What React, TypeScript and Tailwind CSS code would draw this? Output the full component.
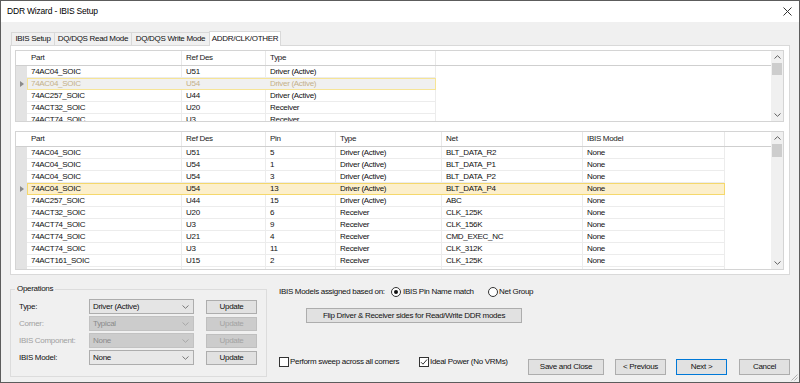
import React from "react";

type Col = { label: string; w: string };

const upperCols: Col[] = [
  { label: "Part", w: "w-[155px]" },
  { label: "Ref Des", w: "w-[84px]" },
  { label: "Type", w: "w-[170px]" },
];

const lowerCols: Col[] = [
  { label: "Part", w: "w-[155px]" },
  { label: "Ref Des", w: "w-[84px]" },
  { label: "Pin", w: "w-[70px]" },
  { label: "Type", w: "w-[106px]" },
  { label: "Net", w: "w-[141px]" },
  { label: "IBIS Model", w: "w-[142px]" },
];

const upperRows: string[][] = [
  ["74AC04_SOIC", "U51", "Driver (Active)"],
  ["74AC04_SOIC", "U54", "Driver (Active)"],
  ["74AC257_SOIC", "U44", "Driver (Active)"],
  ["74ACT32_SOIC", "U20", "Receiver"],
  ["74ACT74_SOIC", "U3", "Receiver"],
];

const lowerRows: string[][] = [
  ["74AC04_SOIC", "U51", "5", "Driver (Active)", "BLT_DATA_R2", "None"],
  ["74AC04_SOIC", "U54", "1", "Driver (Active)", "BLT_DATA_P1", "None"],
  ["74AC04_SOIC", "U54", "3", "Driver (Active)", "BLT_DATA_P2", "None"],
  ["74AC04_SOIC", "U54", "13", "Driver (Active)", "BLT_DATA_P4", "None"],
  ["74AC257_SOIC", "U44", "15", "Driver (Active)", "ABC", "None"],
  ["74ACT32_SOIC", "U20", "6", "Receiver", "CLK_125K", "None"],
  ["74ACT74_SOIC", "U3", "9", "Receiver", "CLK_156K", "None"],
  ["74ACT74_SOIC", "U21", "4", "Receiver", "CMD_EXEC_NC", "None"],
  ["74ACT74_SOIC", "U3", "11", "Receiver", "CLK_312K", "None"],
  ["74ACT161_SOIC", "U15", "2", "Receiver", "CLK_125K", "None"],
  ["", "", "", "", "", ""],
];

function ChevUp() {
  return (
    <svg width="7" height="4" viewBox="0 0 7 4">
      <path d="M0.5 3.5 L3.5 0.7 L6.5 3.5" stroke="#606060" strokeWidth="1" fill="none" />
    </svg>
  );
}
function ChevDown({ color = "#606060" }: { color?: string }) {
  return (
    <svg width="7" height="4" viewBox="0 0 7 4">
      <path d="M0.5 0.5 L3.5 3.3 L6.5 0.5" stroke={color} strokeWidth="1" fill="none" />
    </svg>
  );
}

function Arrow() {
  return (
    <svg width="4" height="6" viewBox="0 0 4 6">
      <polygon points="0,0 4,3 0,6" fill="#8a8a8a" />
    </svg>
  );
}

function Grid({
  cols,
  rows,
  selected,
  inactive,
  h,
  thumb,
}: {
  cols: Col[];
  rows: string[][];
  selected: number;
  inactive: boolean;
  h: string;
  thumb: string;
}) {
  return (
    <div className={`flex border border-[#d4d4d4] bg-white overflow-hidden shrink-0 ${h}`}>
      <div className="flex-1 flex flex-col overflow-hidden">
        <div className="flex h-[15px] shrink-0 border-b border-[#cfcfcf]">
          <div className="w-[11px] shrink-0" />
          {cols.map((c) => (
            <div
              key={c.label}
              className={`${c.w} shrink-0 flex items-center pl-[4px] border-r border-[#e8e8e8] text-[#222]`}
            >
              {c.label}
            </div>
          ))}
        </div>
        {rows.map((r, i) => {
          const sel = i === selected;
          return (
            <div key={i} className="flex h-[12px] shrink-0">
              <div className="w-[11px] shrink-0 bg-[#e3e3e3] flex items-center pl-[4px]">
                {sel ? <Arrow /> : null}
              </div>
              <div
                className={
                  sel
                    ? inactive
                      ? "flex bg-[#f0f0f0] shadow-[inset_0_0_0_1px_#f6e496] text-[#c4b08a]"
                      : "flex bg-[#fcefcb] shadow-[inset_0_0_0_1px_#f5d86c] text-[#111]"
                    : "flex text-[#111]"
                }
              >
                {cols.map((c, j) => (
                  <div
                    key={j}
                    className={`${c.w} shrink-0 flex items-center pl-[4px] whitespace-nowrap overflow-hidden ${
                      sel ? "" : "border-r border-b border-[#ececec]"
                    }`}
                  >
                    {r[j]}
                  </div>
                ))}
              </div>
            </div>
          );
        })}
      </div>
      <div className="w-[12px] shrink-0 bg-[#f0f0f0] flex flex-col">
        <div className="h-[12px] flex items-center justify-center">
          <ChevUp />
        </div>
        <div className={`mx-[1px] bg-[#cdcdcd] ${thumb}`} />
        <div className="flex-1" />
        <div className="h-[12px] flex items-center justify-center">
          <ChevDown />
        </div>
      </div>
    </div>
  );
}

function Select({ value, disabled, white }: { value: string; disabled?: boolean; white?: boolean }) {
  return (
    <div
      className={`w-[105px] h-[15px] shrink-0 flex items-center justify-between pl-[3px] pr-[4px] border ${
        disabled
          ? "bg-[#cccccc] border-[#c2c2c2] text-[#8a8a8a]"
          : white
          ? "bg-[#e8e8e8] border-[#adadad] text-[#111]"
          : "bg-[#e5e5e5] border-[#adadad] text-[#111]"
      }`}
    >
      <span>{value}</span>
      <ChevDown color={disabled ? "#a8a8a8" : "#777"} />
    </div>
  );
}

function Btn({ label, w, disabled, def }: { label: string; w: string; disabled?: boolean; def?: boolean }) {
  return (
    <div
      className={`${w} h-[14px] ml-[12px] shrink-0 flex items-center justify-center border ${
        disabled
          ? "bg-[#cccccc] border-[#bfbfbf] text-[#a3a3a3]"
          : def
          ? "bg-[#e1e1e1] border-[#0078d7] text-[#111]"
          : "bg-[#e1e1e1] border-[#adadad] text-[#111]"
      }`}
    >
      {label}
    </div>
  );
}

function OpRow({
  label,
  value,
  disabled,
  white,
}: {
  label: string;
  value: string;
  disabled?: boolean;
  white?: boolean;
}) {
  return (
    <div className="flex items-center h-[15px]">
      <div className={`w-[70px] shrink-0 ${disabled ? "text-[#a0a0a0]" : "text-[#111]"}`}>{label}</div>
      <Select value={value} disabled={disabled} white={white} />
      <Btn label="Update" w="w-[51px]" disabled={disabled} />
    </div>
  );
}

function Radio({ checked }: { checked?: boolean }) {
  return (
    <div className="w-[10px] h-[10px] rounded-full border border-[#333] bg-white flex items-center justify-center shrink-0">
      {checked ? <div className="w-[4px] h-[4px] rounded-full bg-[#111]" /> : null}
    </div>
  );
}

function Check({ checked }: { checked?: boolean }) {
  return (
    <div className="w-[10px] h-[10px] border border-[#333] bg-white flex items-center justify-center shrink-0">
      {checked ? (
        <svg width="8" height="8" viewBox="0 0 8 8">
          <path d="M1 4.2 L3 6.2 L7 1.5" stroke="#333" strokeWidth="1" fill="none" />
        </svg>
      ) : null}
    </div>
  );
}

export default function App() {
  return (
    <div className="relative w-[800px] h-[383px] bg-[#f0f0f0] border border-[#5c5c5c] flex flex-col overflow-hidden font-['Liberation_Sans',Arial,sans-serif] text-[8px] leading-none tracking-[-0.3px] text-[#111]">
      {/* Title bar */}
      <div className="h-[21px] shrink-0 bg-white flex items-center justify-between pl-[6px] pr-[7px]">
        <span className="text-[8.5px] text-black tracking-[-0.2px]">DDR Wizard - IBIS Setup</span>
        <svg width="9" height="9" viewBox="0 0 9 9">
          <path d="M0.5 0.5 L8.5 8.5 M8.5 0.5 L0.5 8.5" stroke="#333" strokeWidth="1" />
        </svg>
      </div>

      <div className="flex-1 flex flex-col px-[9px] pt-[9px]">
        {/* Tabs */}
        <div className="flex items-start h-[14px] shrink-0 pl-[1px]">
          <div className="w-[44px] h-[13px] mt-[1px] border-t border-l border-r border-[#d9d9d9] flex items-center justify-center">
            IBIS Setup
          </div>
          <div className="w-[78px] h-[13px] mt-[1px] -ml-px border-t border-l border-r border-[#d9d9d9] flex items-center justify-center">
            DQ/DQS Read Mode
          </div>
          <div className="w-[79px] h-[13px] mt-[1px] -ml-px border-t border-l border-r border-[#d9d9d9] flex items-center justify-center">
            DQ/DQS Write Mode
          </div>
          <div className="relative z-10 w-[72px] h-[15px] -ml-px bg-white border-t border-l border-r border-[#d9d9d9] flex items-center justify-center">
            ADDR/CLK/OTHER
          </div>
        </div>

        {/* Tab panel */}
        <div className="h-[230px] shrink-0 bg-white border border-[#d9d9d9] pt-[4px] pl-[4px] pr-[5px] flex flex-col gap-[9px]">
          <Grid cols={upperCols} rows={upperRows} selected={1} inactive h="h-[72px]" thumb="h-[12px]" />
          <Grid cols={lowerCols} rows={lowerRows} selected={3} inactive={false} h="h-[139px]" thumb="h-[13px]" />
        </div>

        {/* Bottom area */}
        <div className="flex items-start">
          <fieldset className="w-[257px] h-[93px] mt-[9px] shrink-0 border border-[#dcdcdc]">
            <legend className="ml-[4px] px-[2px] leading-[10px]">Operations</legend>
            <div className="flex flex-col gap-[2px] pl-[8px] pt-[5px]">
              <OpRow label="Type:" value="Driver (Active)" />
              <OpRow label="Corner:" value="Typical" disabled />
              <OpRow label="IBIS Component:" value="None" disabled />
              <OpRow label="IBIS Model:" value="None" white />
            </div>
          </fieldset>

          <div className="flex-1 flex flex-col ml-[12px]">
            <div className="flex items-center h-[10px] mt-[12px]">
              <span className="w-[112px] shrink-0">IBIS Models assigned based on:</span>
              <div className="w-[97px] shrink-0 flex items-center">
                <Radio checked />
                <span className="ml-[2px]">IBIS Pin Name match</span>
              </div>
              <div className="flex items-center">
                <Radio />
                <span className="ml-[1px]">Net Group</span>
              </div>
            </div>

            <div className="ml-[27px] mt-[11px] w-[216px] h-[15px] bg-[#e1e1e1] border border-[#adadad] flex items-center justify-center">
              Flip Driver &amp; Receiver sides for Read/Write DDR modes
            </div>

            <div className="flex items-start mt-[34px]">
              <div className="w-[140px] shrink-0 flex items-center h-[10px]">
                <Check />
                <span className="ml-[1px]">Perform sweep across all corners</span>
              </div>
              <div className="w-[109px] shrink-0 flex items-center h-[10px]">
                <Check checked />
                <span className="ml-[1px]">Ideal Power (No VRMs)</span>
              </div>
              <div className="w-[76px] h-[16px] mt-[2px] shrink-0 bg-[#e1e1e1] border border-[#adadad] flex items-center justify-center">
                Save and Close
              </div>
              <div className="w-[51px] h-[16px] mt-[2px] ml-[11px] shrink-0 bg-[#e1e1e1] border border-[#adadad] flex items-center justify-center">
                &lt; Previous
              </div>
              <div className="w-[51px] h-[16px] mt-[2px] ml-[10px] shrink-0 bg-[#e1e1e1] border border-[#0078d7] flex items-center justify-center">
                Next &gt;
              </div>
              <div className="w-[51px] h-[16px] mt-[2px] ml-[12px] shrink-0 bg-[#e1e1e1] border border-[#adadad] flex items-center justify-center">
                Cancel
              </div>
            </div>
          </div>
        </div>
      </div>

      {/* size grip */}
      <svg className="absolute right-[1px] bottom-[1px]" width="8" height="8" viewBox="0 0 8 8">
        <path d="M7.5 1.5 L1.5 7.5 M7.5 4.5 L4.5 7.5" stroke="#b0b0b0" strokeWidth="1" />
      </svg>
    </div>
  );
}
